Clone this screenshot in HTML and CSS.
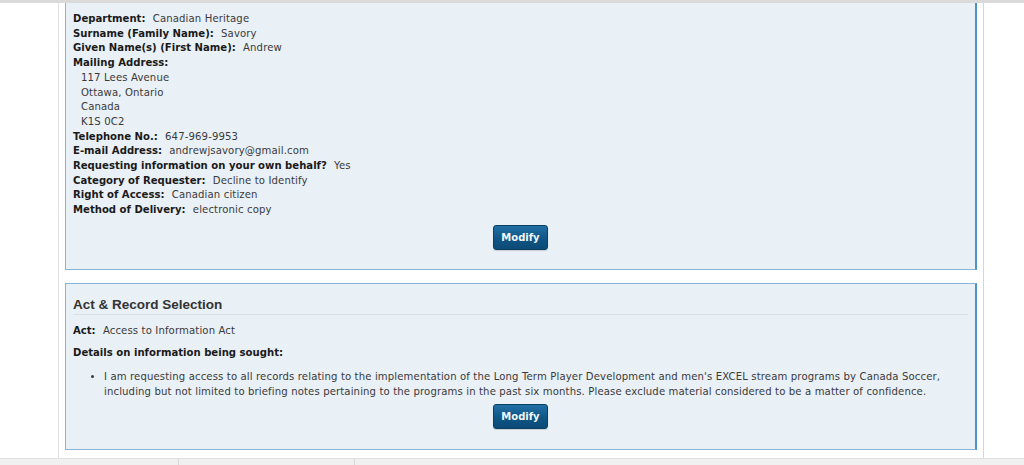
FILE: index.html
```html
<!DOCTYPE html>
<html lang="en">
<head>
<meta charset="utf-8">
<title>Request Summary</title>
<link rel="stylesheet" href="styles.css">
</head>
<body>
<div class="topbar"></div>
<div class="page">
  <div class="panel panel-first">
    <div class="row"><span class="lbl">Department:</span> <span class="val">Canadian Heritage</span></div>
    <div class="row"><span class="lbl">Surname (Family Name):</span> <span class="val">Savory</span></div>
    <div class="row"><span class="lbl">Given Name(s) (First Name):</span> <span class="val">Andrew</span></div>
    <div class="row"><span class="lbl">Mailing Address:</span></div>
    <div class="addr">
      <div class="row val">117 Lees Avenue</div>
      <div class="row val">Ottawa, Ontario</div>
      <div class="row val">Canada</div>
      <div class="row val">K1S 0C2</div>
    </div>
    <div class="row"><span class="lbl">Telephone No.:</span> <span class="val">647-969-9953</span></div>
    <div class="row"><span class="lbl">E-mail Address:</span> <span class="val">andrewjsavory@gmail.com</span></div>
    <div class="row"><span class="lbl">Requesting information on your own behalf?</span> <span class="val">Yes</span></div>
    <div class="row"><span class="lbl">Category of Requester:</span> <span class="val">Decline to Identify</span></div>
    <div class="row"><span class="lbl">Right of Access:</span> <span class="val">Canadian citizen</span></div>
    <div class="row"><span class="lbl">Method of Delivery:</span> <span class="val">electronic copy</span></div>
    <div class="actions"><button class="btn" type="button">Modify</button></div>
  </div>

  <div class="panel panel-second">
    <h2 class="heading">Act &amp; Record Selection</h2>
    <div class="row para para-act"><span class="lbl">Act:</span> <span class="val">Access to Information Act</span></div>
    <div class="row para para-details"><span class="lbl">Details on information being sought:</span></div>
    <ul class="list">
      <li>I am requesting access to all records relating to the implementation of the Long Term Player Development and men's EXCEL stream programs by Canada Soccer, including but not limited to briefing notes pertaining to the programs in the past six months. Please exclude material considered to be a matter of confidence.</li>
    </ul>
    <div class="actions actions-tight"><button class="btn" type="button">Modify</button></div>
  </div>
</div>
<div class="footer">
  <div class="fcell fcell-a"></div>
  <div class="fcell fcell-b"></div>
  <div class="fcell fcell-c"></div>
</div>
</body>
</html>
```

FILE: styles.css
```css
html, body {
  margin: 0;
  padding: 0;
  background: #ffffff;
}
body {
  font-family: "DejaVu Sans", Verdana, sans-serif;
  font-size: 10.1px;
  color: #333333;
  height: 465px;
  overflow: hidden;
}
.topbar {
  height: 3px;
  background: #dadada;
}
.page {
  margin-left: 58px;
  border-left: 1px solid #e2e2e2;
  border-right: 1px solid #d6d6d6;
  padding: 0 6px 8px 6px;
  box-sizing: content-box;
  width: 912px;
}
.panel {
  background: #e9f0f6;
  border: 1px solid #86b6d6;
  border-right: 2px solid #4b94c6;
  padding: 0 7px 19px 7px;
}
.panel-first {
  border-top: none;
  padding-top: 9px;
}
.panel-second {
  margin-top: 13px;
  padding-top: 12px;
  padding-bottom: 20px;
}
.row {
  line-height: 14.7px;
}
.lbl {
  font-weight: bold;
  color: #1a1a1a;
  margin-right: 4px;
}
.val {
  letter-spacing: 0.13px;
  color: #3a3a3a;
}
.addr {
  padding-left: 8px;
}
.actions {
  display: flex;
  justify-content: center;
  padding-top: 7px;
}
.actions-tight {
  padding-top: 5px;
}
.btn {
  font-family: "DejaVu Sans", Verdana, sans-serif;
  font-size: 10px;
  font-weight: bold;
  color: #f2f6fa;
  width: 55px;
  height: 25px;
  padding: 0;
  border: 1px solid #0b3e63;
  border-radius: 3px;
  background: linear-gradient(#226fa5, #0f5585 55%, #0c4a76);
  box-shadow: 0 1px 1px rgba(0,0,0,0.15);
}
.heading {
  margin: 0;
  font-family: "Liberation Sans", Arial, sans-serif;
  font-size: 13.5px;
  font-weight: bold;
  color: #333333;
  line-height: 17px;
  padding-bottom: 1px;
  border-bottom: 1px solid #d9e1e8;
}
.para-act {
  margin-top: 9px;
}
.para-details {
  margin-top: 7px;
}
.list {
  margin: 9px 0 0 0;
  padding-left: 31px;
  line-height: 15px;
  letter-spacing: 0.13px;
  color: #3a3a3a;
}
.footer {
  display: flex;
  height: 10px;
  background: #f0f0f0;
  border-top: 1px solid #e0e0e0;
}
.fcell {
  height: 10px;
}
.fcell-a {
  width: 178px;
  border-right: 1px solid #d8d8d8;
}
.fcell-b {
  width: 175px;
  border-right: 1px solid #d8d8d8;
}
.fcell-c {
  flex: 1;
}
```
